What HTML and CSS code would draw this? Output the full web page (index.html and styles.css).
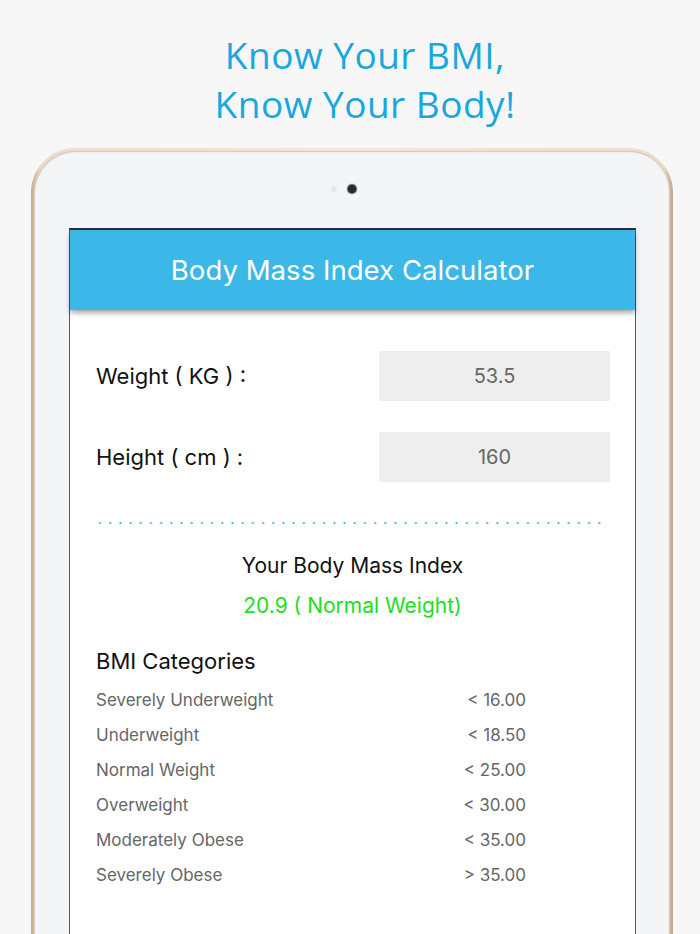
FILE: index.html
```html
<!DOCTYPE html>
<html lang="en">
<head>
<meta charset="utf-8">
<title>BMI Calculator</title>
<link rel="stylesheet" href="styles.css">
</head>
<body>
<h1 class="tagline">Know Your BMI,<br>Know Your Body!</h1>
<div class="device">
  <div class="bezel">
    <div class="camera-row"><span class="camera"></span></div>
    <div class="screen">
      <div class="header">Body Mass Index Calculator</div>
      <div class="content">
        <div class="field">
          <span class="label">Weight ( KG ) :</span>
          <span class="input">53.5</span>
        </div>
        <div class="field field-second">
          <span class="label">Height ( cm ) :</span>
          <span class="input">160</span>
        </div>
        <div class="dots"></div>
        <div class="result-title">Your Body Mass Index</div>
        <div class="result-value">20.9 ( Normal Weight)</div>
        <div class="cat-title">BMI Categories</div>
        <div class="cats">
          <span>Severely Underweight</span><span class="val">&lt; 16.00</span>
          <span>Underweight</span><span class="val">&lt; 18.50</span>
          <span>Normal Weight</span><span class="val">&lt; 25.00</span>
          <span>Overweight</span><span class="val">&lt; 30.00</span>
          <span>Moderately Obese</span><span class="val">&lt; 35.00</span>
          <span>Severely Obese</span><span class="val">&gt; 35.00</span>
        </div>
      </div>
    </div>
  </div>
</div>
</body>
</html>
```
FILE: styles.css
```css
html, body {
  margin: 0;
  padding: 0;
}
body {
  width: 700px;
  height: 934px;
  overflow: hidden;
  background: #f7f7f7;
  font-family: Inter, Roboto, "Liberation Sans", sans-serif;
}
.tagline {
  margin: 0;
  padding: 30px 0 0 30px;
  text-align: center;
  font-family: "Open Sans", "Liberation Sans", sans-serif;
  font-weight: 400;
  font-size: 37px;
  line-height: 49px;
  color: #1aa7df;
  letter-spacing: 0.5px;
}
.device {
  margin: 20px 27px 0 31px;
  height: 800px;
  padding: 3px 3px 0 3px;
  border-radius: 44px 44px 0 0;
  background: linear-gradient(90deg, #c9ab8c 0%, #ecdcc8 1.5%, #f5e7d6 50%, #ecdcc8 98.5%, #c4a588 100%);
  display: flex;
}
.bezel {
  flex: 1;
  border-radius: 41px 41px 0 0;
  background: #f4f5f7;
  box-shadow: inset 1px 1px 1px rgba(150, 120, 90, 0.35), inset -1px 0 1px rgba(150, 120, 90, 0.35);
  display: flex;
  flex-direction: column;
}
.camera-row {
  display: flex;
  justify-content: center;
  margin-top: 34px;
  height: 8px;
}
.camera {
  position: relative;
  width: 8px;
  height: 8px;
  border-radius: 50%;
  background: #222a36;
  box-shadow: 0 0 1px 1px #555;
}
.camera::before {
  content: "";
  position: absolute;
  left: -17px;
  top: 1px;
  width: 6px;
  height: 6px;
  border-radius: 50%;
  background: #e6e7ea;
}
.screen {
  margin: 35px 34px 0 35px;
  flex: 1;
  background: #fff;
  border-top: 2px solid #2e2e2e;
  border-left: 1px solid #555;
  border-right: 1px solid #555;
}
.header {
  height: 80px;
  background: #3bb8e8;
  color: #fff;
  font-size: 27.6px;
  display: flex;
  align-items: center;
  justify-content: center;
  box-shadow: 0 3px 5px rgba(0, 0, 0, 0.35);
  position: relative;
}
.content {
  padding: 41px 25px 0 26px;
}
.field {
  display: flex;
  align-items: center;
  justify-content: space-between;
}
.field-second {
  margin-top: 31px;
}
.label {
  font-size: 22px;
  color: #111;
}
.input {
  width: 231px;
  height: 50px;
  background: #eeeeee;
  color: #666;
  font-size: 20px;
  display: flex;
  align-items: center;
  justify-content: center;
}
.dots {
  margin: 40px 4px 0 -1px;
  height: 2px;
  background-image: radial-gradient(circle, #3bb8e8 0.9px, transparent 1.2px);
  background-size: 10.2px 2px;
  background-repeat: repeat-x;
}
.result-title {
  margin-top: 27px;
  text-align: center;
  font-size: 21px;
  line-height: 30px;
  color: #111;
  margin-left: -26px;
  margin-right: -25px;
}
.result-value {
  margin-top: 10px;
  text-align: center;
  font-size: 21px;
  line-height: 30px;
  color: #22dd22;
  margin-left: -26px;
  margin-right: -25px;
}
.cat-title {
  margin-top: 25px;
  font-size: 22px;
  line-height: 30px;
  color: #111;
}
.cats {
  margin-top: 6px;
  width: 430px;
  display: grid;
  grid-template-columns: 1fr auto;
  grid-auto-rows: 35px;
  align-items: center;
  font-size: 17px;
  color: #666;
}
.cats .val {
  text-align: right;
}
```
